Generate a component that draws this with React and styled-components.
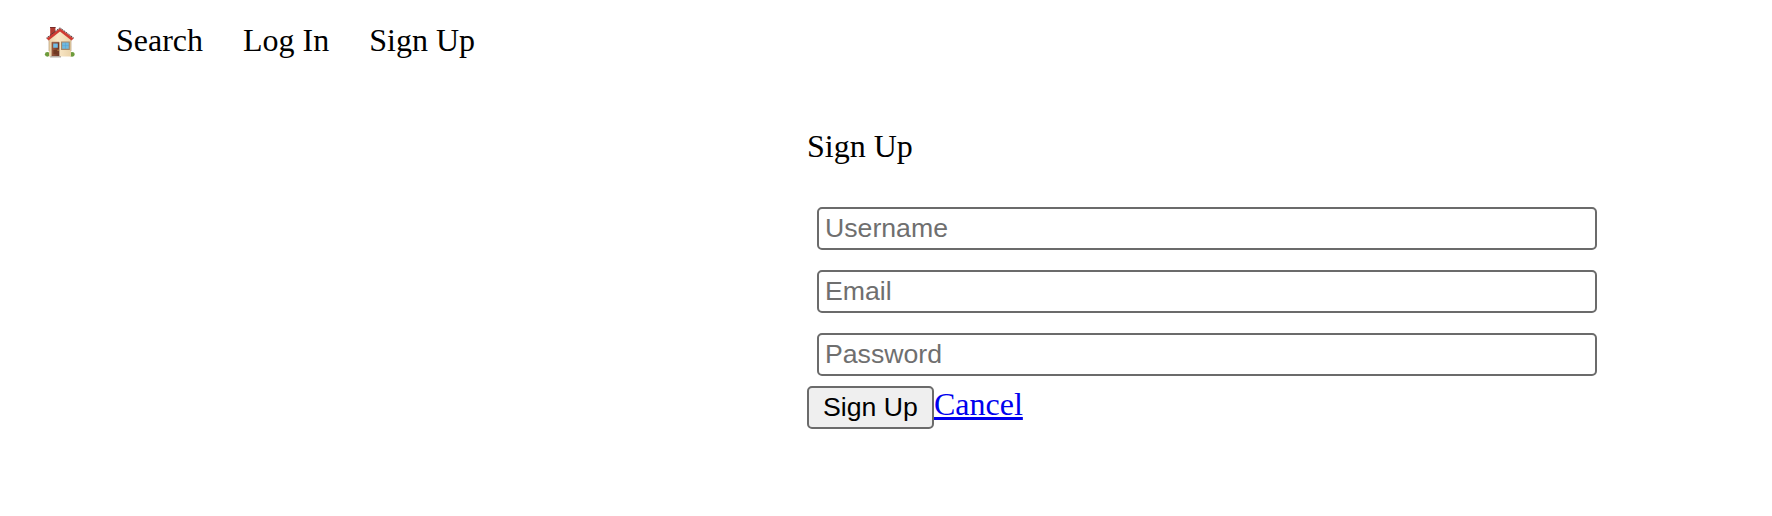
import React from 'react';
import styled, { createGlobalStyle } from 'styled-components';

const GlobalStyle = createGlobalStyle`
  * { box-sizing: border-box; }
  body {
    margin: 0;
    background: #fff;
    color: #000;
    font: 32px/36px "Liberation Serif", "Times New Roman", serif;
  }
`;

const Nav = styled.nav`
  display: flex;
  align-items: flex-start;
  gap: 40px;
  padding: 22px 40px 0;
  height: 128px;
`;

const NavLink = styled.a`
  color: #000;
  white-space: nowrap;
`;

const HomeIcon = styled.svg`
  display: block;
  width: 36px;
  height: 36px;
  margin-top: 1px;
`;

const Form = styled.form`
  display: flex;
  flex-direction: column;
  width: 800px;
  margin-left: 807px;
`;

const Title = styled.div`
  height: 69px;
`;

const Field = styled.input`
  height: 43px;
  margin: 10px;
  padding: 0 6px;
  border: 2px solid #6b6b6b;
  border-radius: 5px;
  background: #fff;
  font: 26.667px "Liberation Sans", Arial, sans-serif;
  outline: none;

  &::placeholder {
    color: #6f6f6f;
    opacity: 1;
  }
`;

const Actions = styled.div`
  display: flex;
  align-items: flex-start;
`;

const SubmitButton = styled.button`
  width: 127px;
  height: 43px;
  padding: 0 0 1px;
  border: 2px solid #6b6b6b;
  border-radius: 5px;
  background: #efefef;
  color: #000;
  font: 26.667px "Liberation Sans", Arial, sans-serif;
`;

const CancelLink = styled.a`
  color: #0000ee;
  text-decoration: underline;
`;

function House() {
  return (
    <HomeIcon viewBox="0 0 36 36" role="img" aria-label="Home">
      <defs>
        <linearGradient id="wall" x1="0" x2="1">
          <stop offset="0" stopColor="#ecd3a8" />
          <stop offset=".4" stopColor="#fae8c8" />
          <stop offset="1" stopColor="#ead3aa" />
        </linearGradient>
        <linearGradient id="door" x1="0" x2="1">
          <stop offset="0" stopColor="#a05a3e" />
          <stop offset="1" stopColor="#6b3524" />
        </linearGradient>
      </defs>
      <ellipse cx="7.4" cy="31.3" rx="2.5" ry="2.4" fill="#6d9b3b" />
      <ellipse cx="32" cy="31.3" rx="2.6" ry="2.4" fill="#6d9b3b" />
      <path d="M9 15 20 6l11 9v18.6H9Z" fill="url(#wall)" />
      <path d="M9 16v12M31 16v12" stroke="#b69c77" strokeWidth=".7" />
      <path d="M10.2 4.6h5.2v5.6l-5.2 4Z" fill="#af3a30" />
      <path d="M10 4.5h5.6" stroke="#762c29" strokeWidth="1" />
      <path d="M20 5.2 6.6 15.4l1.9 2L20 8.4l11.5 9 2.1-2Z" fill="#cf3b32" />
      <path d="M6.4 15.1 20 4.8l13.8 10.3" fill="none" stroke="#493839" strokeWidth="1" strokeDasharray="1.5 .7" />
      <path d="M11.9 19.2h7.2v13.8h-7.2Z" fill="url(#door)" stroke="#754333" strokeWidth=".5" />
      <path d="M13.2 20.5h4.6v4.3h-4.6Z" fill="#70bde6" />
      <path d="M13.4 27h4v4.2h-4Z" fill="#713922" />
      <circle cx="18.1" cy="27.2" r=".6" fill="#e2b24e" />
      <path d="M21.6 19h7.7v7.4h-7.7Z" fill="#6eb9e2" stroke="#a58665" strokeWidth="1.1" />
      <path d="M25.5 19.5v6.5M22 22.6h7" stroke="#559bc4" strokeWidth=".4" />
      <path d="M10.5 33H21v1.4H10Z" fill="#b7b0a8" />
    </HomeIcon>
  );
}

export default function App() {
  return (
    <>
      <GlobalStyle />
      <Nav>
        <House />
        <NavLink>Search</NavLink>
        <NavLink>Log In</NavLink>
        <NavLink>Sign Up</NavLink>
      </Nav>
      <Form>
        <Title>Sign Up</Title>
        <Field placeholder="Username" />
        <Field type="email" placeholder="Email" />
        <Field type="password" placeholder="Password" />
        <Actions>
          <SubmitButton type="button">Sign Up</SubmitButton>
          <CancelLink href="#">Cancel</CancelLink>
        </Actions>
      </Form>
    </>
  );
}
